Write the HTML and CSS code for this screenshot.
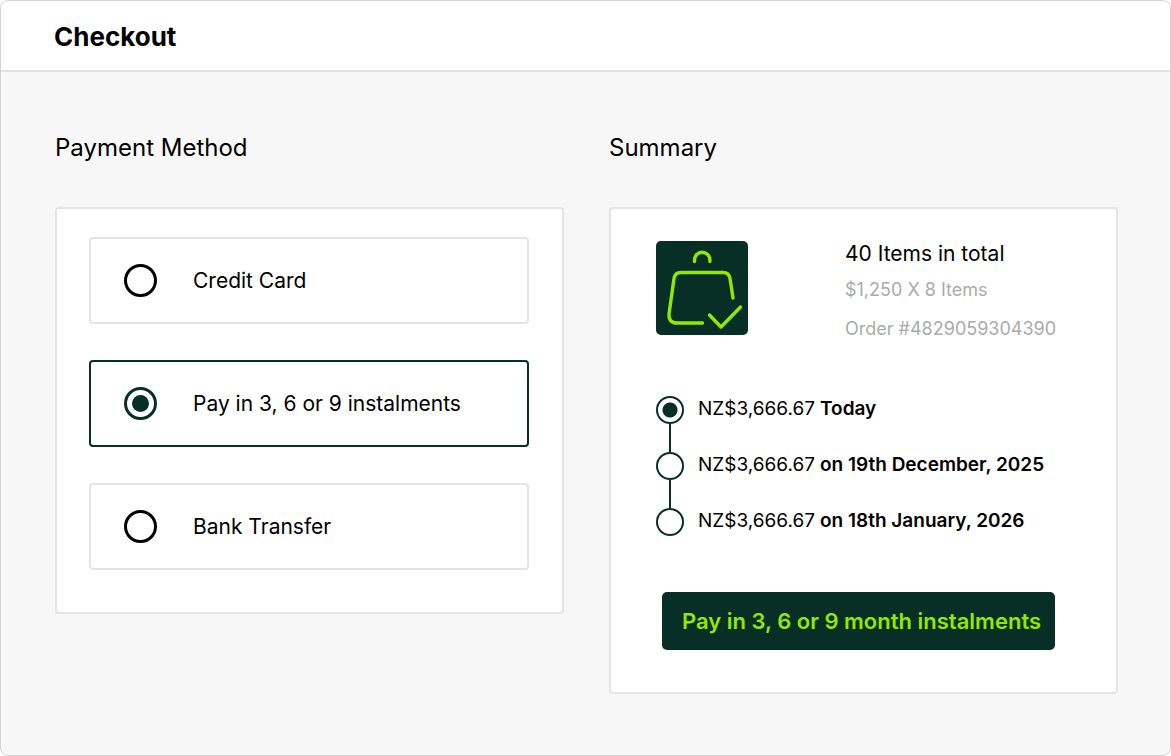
FILE: index.html
```html
<!DOCTYPE html>
<html lang="en">
<head>
    <meta charset="UTF-8">
    <meta name="viewport" content="width=device-width, initial-scale=1.0">
    <title>Checkout</title>
    <link rel="stylesheet" href="styles.css">
</head>
<body>

<div class="window">
    <header class="header">
        <h1>Checkout</h1>
    </header>

    <main class="content">
        <!-- Payment options -->
        <section class="column">
            <h2>Payment Method</h2>
            <form class="card methods">
                <label class="method">
                    <input type="radio" name="method" value="card">
                    <span>Credit Card</span>
                </label>
                <label class="method">
                    <input type="radio" name="method" value="instalments" checked>
                    <span>Pay in 3, 6 or 9 instalments</span>
                </label>
                <label class="method">
                    <input type="radio" name="method" value="bank">
                    <span>Bank Transfer</span>
                </label>
            </form>
        </section>

        <!-- Order summary -->
        <section class="column">
            <h2>Summary</h2>
            <div class="card summary">
                <div class="order">
                    <svg class="bag" viewBox="0 0 92 94" aria-hidden="true">
                        <rect width="92" height="94" rx="5" fill="#082f25"/>
                        <g fill="none" stroke="#93e800" stroke-width="3.4" stroke-linecap="round" stroke-linejoin="round">
                            <path d="M38.5 20.500v-1.500a7.700 7.700 0 0 1 15.400 0v1.500"/>
                            <path d="M77 57L74 37.500Q73 31.500 67 31.500H25Q19 31.500 18 37.500L13 73Q12.500 82 21 82H46.500"/>
                            <path d="M53.500 74L65 86L84.500 66"/>
                        </g>
                    </svg>
                    <div class="order-info">
                        <p class="order-total">40 Items in total</p>
                        <p class="order-detail">$1,250 X 8 Items</p>
                        <p class="order-detail">Order #4829059304390</p>
                    </div>
                </div>

                <ol class="schedule">
                    <li class="current">NZ$3,666.67 <strong>Today</strong></li>
                    <li>NZ$3,666.67 <strong>on 19th December, 2025</strong></li>
                    <li>NZ$3,666.67 <strong>on 18th January, 2026</strong></li>
                </ol>

                <button type="button" class="pay-btn">Pay in 3, 6 or 9 month instalments</button>
            </div>
        </section>
    </main>
</div>

</body>
</html>
```
FILE: styles.css
```css
*, *::before, *::after {
    box-sizing: border-box;
}
body {
    margin: 0;
    font-family: Inter, "Liberation Sans", sans-serif;
    color: #000;
    background: #fff;
}
h1, h2, p, ol {
    margin: 0;
    padding: 0;
}
.window {
    min-height: 100vh;
    background: #f7f7f7;
    border: 1px solid #d4d4d4;
    border-radius: 8px;
    overflow: hidden;
}
.header {
    padding: 20px 53px 17px;
    background: #fff;
    border-bottom: 2px solid #e2e2e2;
}
h1 {
    font-size: 26px;
    line-height: 32px;
    font-weight: 700;
}
.content {
    display: grid;
    grid-template-columns: 1fr 1fr;
    align-items: start;
    gap: 45px;
    padding: 58px 52px 60px 54px;
}
h2 {
    margin-bottom: 41px;
    font-size: 24px;
    line-height: 36px;
    font-weight: 400;
}
.card {
    background: #fff;
    border: 2px solid #e4e4e4;
    border-radius: 4px;
}

/* Payment methods */
.methods {
    display: flex;
    flex-direction: column;
    gap: 36px;
    padding: 28px 33px 42px 32px;
}
.method {
    display: flex;
    align-items: center;
    gap: 36px;
    height: 87px;
    padding-left: 33px;
    border: 2px solid #e4e4e4;
    border-radius: 4px;
    font-size: 21px;
    line-height: 28px;
}
.method:has(input:checked) {
    border-color: #082f25;
}
.method input {
    appearance: none;
    display: grid;
    place-items: center;
    width: 33px;
    height: 33px;
    margin: 0;
    border: 3px solid #000;
    border-radius: 50%;
}
.method input:checked {
    border-color: #082f25;
}
.method input:checked::before {
    content: "";
    width: 17px;
    height: 17px;
    border-radius: 50%;
    background: #082f25;
}

/* Summary */
.summary {
    padding: 32px 45px 42px;
}
.order {
    display: flex;
    gap: 97px;
}
.bag {
    flex: none;
    width: 92px;
    height: 94px;
}
.order-info {
    padding-top: 1px;
    white-space: nowrap;
}
.order-total {
    margin-bottom: 12px;
    font-size: 21px;
    line-height: 24px;
}
.order-detail {
    margin-bottom: 15px;
    font-size: 18px;
    line-height: 24px;
    color: #a9abaa;
}
.order-detail:last-child {
    margin-bottom: 0;
}
.schedule {
    display: flex;
    flex-direction: column;
    gap: 28px;
    margin: 55px 0 56px;
    list-style: none;
    font-size: 19px;
    line-height: 26px;
    white-space: nowrap;
}
.schedule li {
    display: flex;
    gap: 5px;
    position: relative;
}
.schedule li::before {
    content: "";
    width: 28px;
    height: 28px;
    margin-right: 9px;
    border: 2px solid #082f25;
    border-radius: 50%;
}
.schedule .current::before {
    background: radial-gradient(circle, #082f25 7px, transparent 8px);
}
/* Line down to the next payment */
.schedule li:not(:last-child)::after {
    content: "";
    position: absolute;
    top: 28px;
    left: 13px;
    width: 2px;
    height: 28px;
    background: #082f25;
}
.schedule strong {
    font-weight: 600;
}
.pay-btn {
    display: block;
    width: 393px;
    height: 58px;
    margin-left: 6px;
    padding: 0 14px 0 20px;
    border: 0;
    border-radius: 5px;
    background: #082f25;
    color: #93e800;
    font-family: inherit;
    font-size: 22px;
    font-weight: 600;
    white-space: nowrap;
}

@media (max-width: 1000px) {
    .content {
        grid-template-columns: 1fr;
    }
}
```
